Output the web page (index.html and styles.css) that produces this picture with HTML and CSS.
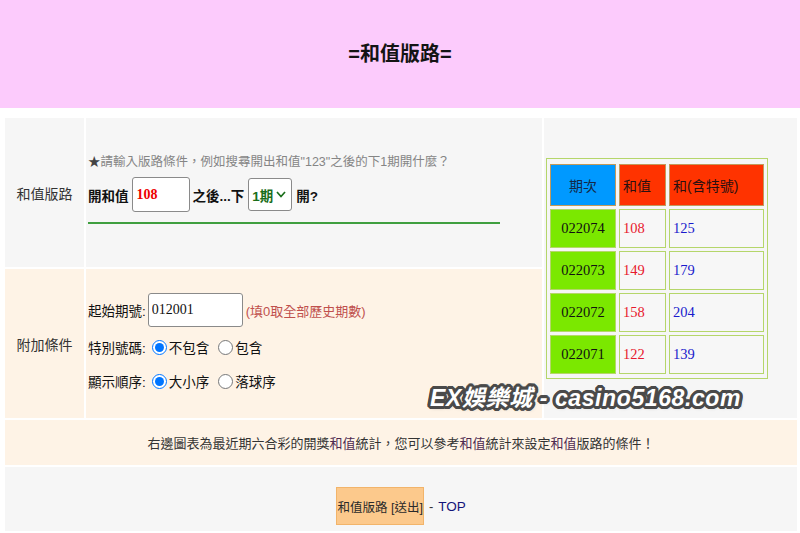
FILE: index.html
```html
<!DOCTYPE html>
<html lang="zh-Hant">
<head>
<meta charset="utf-8">
<title>和值版路</title>
<link rel="stylesheet" href="styles.css">
</head>
<body>
<div class="header"><h1 class="title">=和值版路=</h1></div>

<table class="main">
  <tr class="r1">
    <td class="label gray">和值版路</td>
    <td class="content gray c1">
      <div class="hint"><span class="star">★</span>請輸入版路條件，例如搜尋開出和值"123"之後的下1期開什麼？</div>
      <div class="line2">
        <b>開和值</b>
        <input class="inp inp-sum" type="text" value="108">
        <b>之後...下</b>
        <span class="sel">
          <span class="sel-text">1期</span>
          <svg class="chev" width="10" height="7" viewBox="0 0 10 7"><polyline points="1,1 5,5.5 9,1" fill="none" stroke="#1a6e1a" stroke-width="1.7"/></svg>
        </span>
        <b>開?</b>
      </div>
      <div class="rule"></div>
    </td>
    <td class="side gray" rowspan="2">
      <table class="stats">
        <tr class="hrow">
          <th class="h-period">期次</th>
          <th class="h-sum">和值</th>
          <th class="h-all">和(含特號)</th>
        </tr>
        <tr><td class="period">022074</td><td class="sum">108</td><td class="all">125</td></tr>
        <tr><td class="period">022073</td><td class="sum">149</td><td class="all">179</td></tr>
        <tr><td class="period">022072</td><td class="sum">158</td><td class="all">204</td></tr>
        <tr><td class="period">022071</td><td class="sum">122</td><td class="all">139</td></tr>
      </table>
    </td>
  </tr>
  <tr class="r2">
    <td class="label peach">附加條件</td>
    <td class="content peach c2">
      <div class="opt">
        <span class="opt-label">起始期號:</span>
        <input class="inp inp-start" type="text" value="012001">
        <span class="tip">(填0取全部歷史期數)</span>
      </div>
      <div class="opt">
        <span class="opt-label">特別號碼:</span>
        <label class="radio"><input type="radio" name="sp" checked>不包含</label>
        <label class="radio"><input type="radio" name="sp">包含</label>
      </div>
      <div class="opt">
        <span class="opt-label">顯示順序:</span>
        <label class="radio"><input type="radio" name="ord" checked>大小序</label>
        <label class="radio"><input type="radio" name="ord">落球序</label>
      </div>
    </td>
  </tr>
  <tr class="r3">
    <td class="note peach" colspan="3">右邊圖表為最近期六合彩的開獎<span class="hl">和值</span>統計，您可以參考<span class="hl">和值</span>統計來設定<span class="hl">和值</span>版路的條件！</td>
  </tr>
  <tr class="r4">
    <td class="actions gray" colspan="3">
      <button class="submit" type="button">和值版路 [送出]</button>
      <span class="dash">-</span>
      <a class="top" href="#">TOP</a>
    </td>
  </tr>
</table>

<div class="watermark">EX娛樂城 - casino5168.com</div>
</body>
</html>
```

FILE: styles.css
```css
html, body {
  margin: 0;
  padding: 0;
  background: #ffffff;
  overflow: hidden;
}

body {
  position: relative;
  font-family: "Liberation Sans", "Noto Sans CJK TC", sans-serif;
  font-size: 13.5px;
  color: #222;
}

.header {
  height: 108px;
  background: #fccbfc;
  display: flex;
  align-items: center;
  justify-content: center;
}

.title {
  margin: 0;
  font-size: 20px;
  font-weight: bold;
  color: #141414;
  line-height: 1;
}

.main {
  margin: 8px 0 0 3px;
  width: 794px;
  table-layout: fixed;
  border-collapse: separate;
  border-spacing: 2px;
}

.main > tbody > tr > td {
  padding: 0;
}

.gray { background: #f6f6f6; }
.peach { background: #fef3e6; }

.r1 { height: 149px; }
.r2 { height: 149px; }
.r3 { height: 45px; }
.r4 { height: 64px; }

.label {
  width: 79px;
  text-align: center;
  vertical-align: middle;
  color: #333;
  font-size: 14px;
}

.content {
  width: 454px;
  vertical-align: top;
}

.side {
  width: 253px;
  vertical-align: middle;
}

/* row 1 */
.c1 { padding: 34px 0 0 2px !important; }

.hint {
  height: 20px;
  line-height: 20px;
  font-size: 12.5px;
  color: #858585;
}
.star { color: #444; }

.line2 {
  margin-top: 5px;
  height: 35px;
  display: flex;
  align-items: center;
  gap: 3px;
  font-size: 13.5px;
  color: #111;
}

.inp {
  box-sizing: border-box;
  border: 1px solid #8a8a8a;
  border-radius: 3px;
  background: #fff;
  padding: 0 4px;
  margin: 0;
  outline: none;
}

.inp-sum {
  width: 58px;
  height: 35px;
  font-family: "Liberation Serif", serif;
  font-weight: bold;
  font-size: 14px;
  color: #ee0000;
}

.sel {
  box-sizing: border-box;
  width: 44px;
  height: 33px;
  border: 1px solid #8a8a8a;
  border-radius: 3px;
  background: #fff;
  display: inline-flex;
  align-items: center;
  padding-left: 3px;
  gap: 3px;
  margin: 0 1px;
}
.sel-text {
  font-weight: bold;
  color: #1a6e1a;
  font-size: 13.5px;
}

.rule {
  margin-top: 10px;
  width: 412px;
  border-top: 2px solid #3f9f3f;
}

/* row 2 */
.c2 { padding: 24px 0 0 2px !important; }

.opt {
  height: 34px;
  display: flex;
  align-items: center;
  gap: 2px;
  color: #111;
}
.opt:first-child { margin-bottom: 3px; }

.inp-start {
  width: 95px;
  height: 34px;
  font-family: "Liberation Serif", serif;
  font-size: 14px;
  color: #111;
  padding-left: 3px;
}

.tip {
  color: #c0504d;
  font-size: 13px;
  margin-left: 1px;
}

.radio {
  display: inline-flex;
  align-items: center;
}
.radio input {
  width: 15px;
  height: 15px;
  margin: 0 2px 0 4px;
}
.radio + .radio input { margin-left: 7px; }

/* stats table */
.stats {
  border: 1px solid #b5d66a;
  border-collapse: separate;
  border-spacing: 3px;
  padding: 2px 0 1px 0;
  margin-left: 2px;
  background: #f6f6f6;
}

.stats th {
  height: 42px;
  padding: 0 0 0 3px;
  font-weight: normal;
  font-size: 14px;
  text-align: left;
  color: #2a1010;
  box-sizing: border-box;
  border: 1px solid #c29a5a;
}
.stats .h-period {
  width: 66px;
  background: #0099ff;
  text-align: center;
  padding: 0;
  color: #142846;
}
.stats .h-sum { width: 47px; background: #ff3300; }
.stats .h-all { width: 95px; background: #ff3300; }

.stats td {
  height: 39px;
  box-sizing: border-box;
  border: 1px solid #b5d66a;
  font-family: "Liberation Serif", serif;
  font-size: 14.5px;
  padding: 0 0 0 3px;
  background: #f7f7f7;
}
.stats td.period {
  background: #7be800;
  text-align: center;
  padding: 0;
  color: #111;
}
.stats td.sum { color: #e8182e; }
.stats td.all { color: #1a1acc; }

/* row 3 */
.note {
  text-align: center;
  vertical-align: middle;
  font-size: 13px;
  color: #333;
}
.hl { color: #4e2a50; }

/* row 4 */
.actions {
  text-align: center;
  vertical-align: top;
  padding-top: 20px !important;
}

.submit {
  box-sizing: border-box;
  width: 88px;
  height: 38px;
  background: #fcc98c;
  border: 1px solid #f2b46a;
  border-radius: 0;
  font-family: "Liberation Sans", "Noto Sans CJK TC", sans-serif;
  font-size: 12.5px;
  color: #2a2a2a;
  padding: 0;
  vertical-align: middle;
}

.dash {
  font-size: 13px;
  color: #333;
  vertical-align: middle;
  margin: 0 1px;
}

.top {
  font-size: 13.5px;
  color: #14147a;
  text-decoration: none;
  vertical-align: middle;
}

/* watermark overlay */
.watermark {
  position: absolute;
  left: 430px;
  top: 387px;
  font-family: "Liberation Sans", "Noto Sans CJK TC", sans-serif;
  font-size: 23px;
  font-weight: bold;
  font-style: italic;
  letter-spacing: 0.6px;
  line-height: 1;
  color: #ffffff;
  white-space: nowrap;
  text-shadow:
    3px 0 0 #4a4a4a, -3px 0 0 #4a4a4a, 0 3px 0 #4a4a4a, 0 -3px 0 #4a4a4a,
    2px 2px 0 #4a4a4a, -2px -2px 0 #4a4a4a, 2px -2px 0 #4a4a4a, -2px 2px 0 #4a4a4a,
    3px 1px 0 #4a4a4a, -3px 1px 0 #4a4a4a, 3px -1px 0 #4a4a4a, -3px -1px 0 #4a4a4a,
    1px 3px 0 #4a4a4a, -1px 3px 0 #4a4a4a, 1px -3px 0 #4a4a4a, -1px -3px 0 #4a4a4a,
    1px 1px 4px rgba(0,0,0,0.4);
}
```
